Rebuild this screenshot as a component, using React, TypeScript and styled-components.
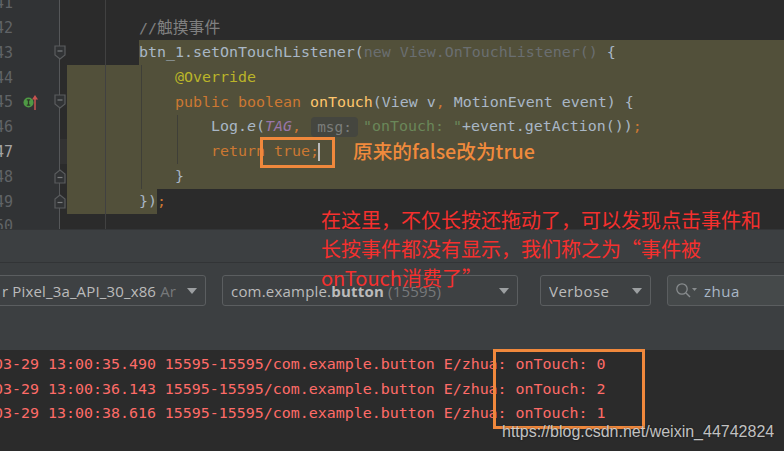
import React from "react";
import styled, { createGlobalStyle } from "styled-components";

const GlobalStyle = createGlobalStyle`
  html, body {
    margin: 0;
    padding: 0;
    background: #2b2b2b;
  }
`;

const mono = `"DejaVu Sans Mono", "Noto Sans CJK SC", monospace`;
const ROW = 24.8;

const Page = styled.div`
  position: relative;
  width: 784px;
  height: 451px;
  overflow: hidden;
  font-family: ${mono};
`;

/* editor */
const Editor = styled.div`
  position: relative;
  display: flex;
  height: 229px;
  overflow: hidden;
  background: #2b2b2b;
`;

const Gutter = styled.div`
  position: relative;
  z-index: 2;
  flex: 0 0 60px;
  min-width: 0;
  height: 260px;
  margin-top: -9.6px;
  background: #313335;

  &::after {
    content: "";
    position: absolute;
    left: 59px;
    top: 0;
    bottom: 0;
    width: 1px;
    background: #555759;
  }
`;

const GutterRow = styled.div`
  display: flex;
  align-items: center;
  width: 66px;
  height: ${ROW}px;
`;

const LineNo = styled.div<{ $current?: boolean }>`
  flex: 0 0 13px;
  min-width: 0;
  display: flex;
  justify-content: flex-end;
  padding-top: 1px;
  font-size: 15px;
  color: ${(p) => (p.$current ? "#a4a3a3" : "#606366")};
`;

const Marks = styled.div`
  flex: 0 0 41px;
  display: flex;
  align-items: center;
  padding-left: 10px;
  box-sizing: border-box;
`;

const FoldIcon = styled.svg`
  position: relative;
  z-index: 1;
  flex: none;
`;

const Code = styled.div`
  flex: 1;
  min-width: 0;
  margin-top: -9.6px;
  font-size: 14.95px;
  white-space: pre;
  color: #a9b7c6;
`;

const CodeRow = styled.div<{ $current?: boolean }>`
  display: flex;
  height: ${ROW}px;
  line-height: ${ROW + 1}px;
  background: ${(p) => (p.$current ? "#323232" : "none")};
`;

const CodeText = styled.div<{ $indent: number; $sel?: "full" | "tail" | "head" }>`
  box-sizing: border-box;
  min-width: 0;
  margin-left: ${(p) => (p.$sel === "tail" ? 79 : 7)}px;
  padding-left: ${(p) => p.$indent}px;
  flex: ${(p) => (p.$sel === "head" ? "0 0 90px" : 1)};
  background: ${(p) => (p.$sel ? "#52503a" : "none")};
`;

const Keyword = styled.span`
  color: #cc7832;
`;
const Annotation = styled.span`
  color: #bbb529;
`;
const Method = styled.span`
  color: #ffc66d;
`;
const Comment = styled.span`
  color: #808080;
`;
const CommentCjk = styled.span`
  font-size: 15.8px;
`;
const Folded = styled.span`
  color: #6a6e70;
`;
const Static = styled.span`
  font-style: italic;
`;
const Constant = styled.span`
  color: #9876aa;
  font-style: italic;
`;
const Str = styled.span`
  color: #6a8759;
`;
const Hint = styled.span`
  display: inline-block;
  width: 47px;
  height: 20px;
  margin: 0 5px 0 1px;
  border-radius: 4px;
  background: #45463f;
  color: #7b7d7b;
  font-size: 14.4px;
  line-height: 20px;
  text-align: center;
  vertical-align: middle;
`;
const Caret = styled.span`
  display: inline-block;
  width: 2px;
  height: 18px;
  margin-left: -1px;
  background: #bbbbbb;
  vertical-align: middle;
`;

const MarginLine = styled.div`
  position: absolute;
  left: 105px;
  top: 0;
  bottom: 0;
  width: 1px;
  background: #414141;
`;

const IndentGuide = styled.div<{ $x: number; $top: number; $h: number }>`
  position: absolute;
  left: ${(p) => p.$x}px;
  top: ${(p) => p.$top}px;
  height: ${(p) => p.$h}px;
  width: 1px;
  background: #3f3f38;
`;

/* logcat toolbar */
const Toolbar = styled.div`
  height: 121px;
  box-sizing: border-box;
  background: #3c3f41;
  border-top: 1px solid #333537;
`;

const TopStrip = styled.div`
  height: 32px;
  border-bottom: 1px solid #323436;
`;

const Filters = styled.div`
  display: flex;
  padding-top: 12px;
`;

const Combo = styled.div<{ $width: number; $left: number; $field?: boolean }>`
  flex: 0 0 auto;
  display: flex;
  align-items: center;
  box-sizing: border-box;
  width: ${(p) => p.$width}px;
  height: 31px;
  margin-left: ${(p) => p.$left}px;
  padding: 0 8px;
  border: 1px solid #5b5e60;
  border-radius: 3px;
  background: ${(p) => (p.$field ? "#45494a" : "#3e4143")};
  font-family: "Open Sans", "Noto Sans", sans-serif;
  font-size: 15px;
  color: #bbbbbb;
  white-space: nowrap;
  overflow: hidden;
`;

const ComboLabel = styled.span<{ $spacing: number; $inset?: number }>`
  flex: 1;
  min-width: 0;
  margin-left: ${(p) => p.$inset || 0}px;
  letter-spacing: ${(p) => p.$spacing}px;
  overflow: hidden;
`;

const Muted = styled.span`
  color: #77797b;
`;

const Strong = styled.span`
  font-weight: 700;
`;

const Arrow = styled.span`
  flex: none;
  width: 0;
  height: 0;
  border-left: 5.5px solid transparent;
  border-right: 5.5px solid transparent;
  border-top: 6px solid #9c9fa1;
`;

const SearchText = styled.span`
  margin-left: 6px;
  letter-spacing: 0.5px;
  color: #a9b7c6;
`;

/* logcat output */
const Log = styled.div`
  height: 101px;
  margin-left: -6px;
  padding-top: 2px;
  box-sizing: border-box;
  background: #2b2b2b;
  font-size: 14.95px;
  color: #ff6b68;
`;

const LogRow = styled.div`
  height: 24.6px;
  line-height: 24.6px;
  white-space: pre;
`;

/* hand drawn notes over the screenshot */
const NoteBox = styled.div<{ $x: number; $y: number; $w: number; $h: number }>`
  position: absolute;
  z-index: 3;
  left: ${(p) => p.$x}px;
  top: ${(p) => p.$y}px;
  width: ${(p) => p.$w}px;
  height: ${(p) => p.$h}px;
  box-sizing: border-box;
  border: 3px solid #f0883c;
`;

const OrangeNote = styled.div`
  position: absolute;
  z-index: 3;
  left: 353px;
  top: 137px;
  font-family: "Noto Sans CJK SC", sans-serif;
  font-size: 19.7px;
  font-weight: 500;
  line-height: 28px;
  color: #f08a3c;
  white-space: nowrap;
`;

const RedNote = styled.div`
  position: absolute;
  z-index: 3;
  left: 321px;
  top: 205px;
  font-family: "Noto Sans CJK SC", sans-serif;
  font-size: 20px;
  line-height: 29px;
  color: #f5302e;
  white-space: nowrap;
`;

const Watermark = styled.div`
  position: absolute;
  z-index: 4;
  left: 502px;
  top: 422px;
  font-family: "Liberation Sans", Arial, sans-serif;
  font-size: 16px;
  line-height: 20px;
  color: rgba(225, 225, 225, 0.85);
  text-shadow: 0 0 2px rgba(0, 0, 0, 0.6);
  white-space: nowrap;
`;

const Fold = ({ up }: { up?: boolean }) => (
  <FoldIcon width="12" height="15" viewBox="0 0 12 15">
    <path
      d={up ? "M1 5 6 1l5 4v9H1Z" : "M1 1h10v9l-5 4-5-4Z"}
      fill="#313335"
      stroke="#5a5c5e"
      strokeWidth="1.2"
    />
    <path d={up ? "M3.5 8.5h5" : "M3.5 6h5"} stroke="#7a7c7e" strokeWidth="1.2" />
  </FoldIcon>
);

const ImplementsIcon = () => (
  <svg width="18" height="18" viewBox="0 0 18 18">
    <circle cx="5.5" cy="9.5" r="5" fill="#4f9a45" />
    <path d="M3.8 6.8h3.4M3.8 12.2h3.4M5.5 6.8v5.4" stroke="#2c3a26" strokeWidth="1.3" fill="none" />
    <path d="M12 17V5" stroke="#c75450" strokeWidth="1.5" />
    <path d="M9 6.5 12 2l3 4.5Z" fill="#c75450" />
  </svg>
);

const SearchIcon = () => (
  <svg width="22" height="18" viewBox="0 0 22 18">
    <circle cx="6" cy="7" r="5.2" fill="none" stroke="#888c8e" strokeWidth="1.3" />
    <path d="M10 11l4 4" stroke="#888c8e" strokeWidth="1.5" />
    <path d="M16 6h5l-2.5 3Z" fill="#888c8e" />
  </svg>
);

const gutterLines = [
  { n: 41 },
  { n: 42 },
  { n: 43, fold: "down" },
  { n: 44 },
  { n: 45, fold: "down", icon: true },
  { n: 46 },
  { n: 47, current: true },
  { n: 48, fold: "up" },
  { n: 49, fold: "up" },
  { n: 50 },
];

const logLines = [
  "03-29 13:00:35.490 15595-15595/com.example.button E/zhua: onTouch: 0",
  "03-29 13:00:36.143 15595-15595/com.example.button E/zhua: onTouch: 2",
  "03-29 13:00:38.616 15595-15595/com.example.button E/zhua: onTouch: 1",
];

const App = () => (
  <Page>
    <GlobalStyle />
    <Editor>
      <Gutter>
        {gutterLines.map((l) => (
          <GutterRow key={l.n}>
            <LineNo $current={l.current}>{l.n}</LineNo>
            <Marks>{l.icon && <ImplementsIcon />}</Marks>
            {l.fold && <Fold up={l.fold === "up"} />}
          </GutterRow>
        ))}
      </Gutter>
      <Code>
        <CodeRow />
        <CodeRow>
          <CodeText $indent={72}>
            <Comment>
              //<CommentCjk>触摸事件</CommentCjk>
            </Comment>
          </CodeText>
        </CodeRow>
        <CodeRow>
          <CodeText $indent={0} $sel="tail">
            btn_1.setOnTouchListener(<Folded>new View.OnTouchListener()</Folded> {"{"}
          </CodeText>
        </CodeRow>
        <CodeRow>
          <CodeText $indent={108} $sel="full">
            <Annotation>@Override</Annotation>
          </CodeText>
        </CodeRow>
        <CodeRow>
          <CodeText $indent={108} $sel="full">
            <Keyword>public boolean </Keyword>
            <Method>onTouch</Method>(View v<Keyword>,</Keyword> MotionEvent event) {"{"}
          </CodeText>
        </CodeRow>
        <CodeRow>
          <CodeText $indent={144} $sel="full">
            Log.<Static>e</Static>(<Constant>TAG</Constant>
            <Keyword>, </Keyword>
            <Hint>msg:</Hint>
            <Str>"onTouch: "</Str>+event.getAction())<Keyword>;</Keyword>
          </CodeText>
        </CodeRow>
        <CodeRow $current>
          <CodeText $indent={144} $sel="full">
            <Keyword>return true;</Keyword>
            <Caret />
          </CodeText>
        </CodeRow>
        <CodeRow>
          <CodeText $indent={108} $sel="full">
            {"}"}
          </CodeText>
        </CodeRow>
        <CodeRow>
          <CodeText $indent={72} $sel="head">
            {"})"}
            <Keyword>;</Keyword>
          </CodeText>
        </CodeRow>
      </Code>
      <MarginLine />
      <IndentGuide $x={141} $top={65} $h={124} />
      <IndentGuide $x={177} $top={115} $h={49} />
    </Editor>

    <Toolbar>
      <TopStrip />
      <Filters>
        <Combo $width={216} $left={-10}>
          <ComboLabel $spacing={0.15} $inset={3}>
            r Pixel_3a_API_30_x86 <Muted>Ar</Muted>
          </ComboLabel>
          <Arrow />
        </Combo>
        <Combo $width={296} $left={16}>
          <ComboLabel $spacing={0.2}>
            com.example.<Strong>button</Strong> <Muted>(15595)</Muted>
          </ComboLabel>
          <Arrow />
        </Combo>
        <Combo $width={111} $left={22}>
          <ComboLabel $spacing={0.45}>Verbose</ComboLabel>
          <Arrow />
        </Combo>
        <Combo $width={140} $left={16} $field>
          <SearchIcon />
          <SearchText>zhua</SearchText>
        </Combo>
      </Filters>
    </Toolbar>

    <Log>
      {logLines.map((line) => (
        <LogRow key={line}>{line}</LogRow>
      ))}
    </Log>

    <NoteBox $x={260} $y={137} $w={75} $h={31} />
    <NoteBox $x={493} $y={349} $w={152} $h={80} />
    <OrangeNote>原来的false改为true</OrangeNote>
    <RedNote>
      <div>在这里，不仅长按还拖动了，可以发现点击事件和</div>
      <div>长按事件都没有显示，我们称之为“事件被</div>
      <div>onTouch消费了”</div>
    </RedNote>
    <Watermark>https://blog.csdn.net/weixin_44742824</Watermark>
  </Page>
);

export default App;
